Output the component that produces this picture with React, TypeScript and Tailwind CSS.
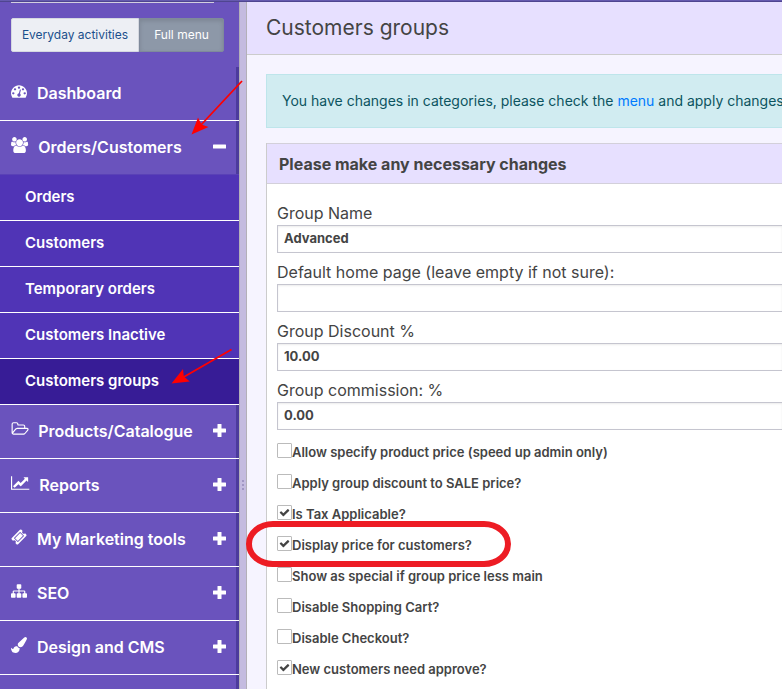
import React from "react";

type IconDef = { w: number; d: string };

const icons: Record<string, IconDef> = {
  dashboard: {
    w: 1792,
    d: "M384 1152q0-53-37.5-90.5t-90.5-37.5-90.5 37.5-37.5 90.5 37.5 90.5 90.5 37.5 90.5-37.5 37.5-90.5zm192-448q0-53-37.5-90.5t-90.5-37.5-90.5 37.5-37.5 90.5 37.5 90.5 90.5 37.5 90.5-37.5 37.5-90.5zm428 481l101-382q6-26-7.5-48.5t-38.5-29.5-48 6.5-30 39.5l-101 382q-60 5-107 43.5t-63 98.5q-20 77 20 146t117 89 146-20 89-117q16-60-6-117t-72-91zm660-33q0-53-37.5-90.5t-90.5-37.5-90.5 37.5-37.5 90.5 37.5 90.5 90.5 37.5 90.5-37.5 37.5-90.5zm-640-640q0-53-37.5-90.5t-90.5-37.5-90.5 37.5-37.5 90.5 37.5 90.5 90.5 37.5 90.5-37.5 37.5-90.5zm448 192q0-53-37.5-90.5t-90.5-37.5-90.5 37.5-37.5 90.5 37.5 90.5 90.5 37.5 90.5-37.5 37.5-90.5zm320 448q0 261-141 483-19 29-54 29h-1402q-35 0-54-29-141-221-141-483 0-182 71-348t191-286 286-191 348-71 348 71 286 191 191 286 71 348z",
  },
  users: {
    w: 1920,
    d: "M593 896q-162 5-265 128h-134q-82 0-138-40.5t-56-118.5q0-353 124-353 6 0 43.5 21t97.5 42.5 119 21.5q67 0 133-23-5 37-5 66 0 139 81 256zm1071 637q0 120-73 189.5t-194 69.5h-874q-121 0-194-69.5t-73-189.5q0-53 3.5-103.5t14-109 26.5-108.5 43-97.5 62-81 85.5-53.5 111.5-20q10 0 43 21.5t73 48 107 48 135 21.5 135-21.5 107-48 73-48 43-21.5q61 0 111.5 20t85.5 53.5 62 81 43 97.5 26.5 108.5 14 109 3.5 103.5zm-1024-1277q0 106-75 181t-181 75-181-75-75-181 75-181 181-75 181 75 75 181zm704 384q0 159-112.5 271.5t-271.5 112.5-271.5-112.5-112.5-271.5 112.5-271.5 271.5-112.5 271.5 112.5 112.5 271.5zm576 225q0 78-56 118.5t-138 40.5h-134q-103-123-265-128 81-117 81-256 0-29-5-66 66 23 133 23 59 0 119-21.5t97.5-42.5 43.5-21q124 0 124 353zm-128-609q0 106-75 181t-181 75-181-75-75-181 75-181 181-75 181 75 75 181z",
  },
  folder: {
    w: 1920,
    d: "M1845 931q0-35-53-35h-1088q-40 0-85.5 21.5t-71.5 52.5l-294 363q-18 24-18 40 0 35 53 35h1088q40 0 86-22t71-53l294-363q18-22 18-39zm-1141-163h768v-160q0-40-28-68t-68-28h-576q-40 0-68-28t-28-68v-64q0-40-28-68t-68-28h-320q-40 0-68 28t-28 68v853l256-315q44-53 116-87.5t140-34.5zm1269 163q0 62-46 120l-295 363q-43 53-116 87.5t-140 34.5h-1088q-92 0-158-66t-66-158v-960q0-92 66-158t158-66h320q92 0 158 66t66 158v32h544q92 0 158 66t66 158v160h192q54 0 99 24.5t67 70.5q15 32 15 68z",
  },
  chart: {
    w: 2048,
    d: "M2048 1536v128h-2048v-1536h128v1408h1920zm-128-1248v435q0 21-19.5 29.5t-35.5-7.5l-121-121-633 633q-10 10-23 10t-23-10l-233-233-416 416-192-192 585-585q10-10 23-10t23 10l233 233 464-464-121-121q-16-16-7.5-35.5t29.5-19.5h435q14 0 23 9t9 23z",
  },
  ticket: {
    w: 1792,
    d: "M1024 452l316 316-572 572-316-316zm-211 979l618-618q19-19 19-45t-19-45l-362-362q-18-18-45-18t-45 18l-618 618q-19 19-19 45t19 45l362 362q18 18 45 18t45-18zm889-637l-907 908q-37 37-90.5 37t-90.5-37l-126-126q56-56 56-136t-56-136-136-56-136 56l-125-126q-37-37-37-90.5t37-90.5l907-906q37-37 90.5-37t90.5 37l125 125q-56 56-56 136t56 136 136 56 136-56l126 125q37 37 37 90.5t-37 90.5z",
  },
  sitemap: {
    w: 1792,
    d: "M1792 1248v320q0 40-28 68t-68 28h-320q-40 0-68-28t-28-68v-320q0-40 28-68t68-28h96v-192h-512v192h96q40 0 68 28t28 68v320q0 40-28 68t-68 28h-320q-40 0-68-28t-28-68v-320q0-40 28-68t68-28h96v-192h-512v192h96q40 0 68 28t28 68v320q0 40-28 68t-68 28h-320q-40 0-68-28t-28-68v-320q0-40 28-68t68-28h96v-192q0-52 38-90t90-38h512v-192h-96q-40 0-68-28t-28-68v-320q0-40 28-68t68-28h320q40 0 68 28t28 68v320q0 40-28 68t-68 28h-96v192h512q52 0 90 38t38 90v192h96q40 0 68 28t28 68z",
  },
  brush: {
    w: 1792,
    d: "M1615 0q70 0 122.5 46.5t52.5 116.5q0 63-45 151-332 629-465 752-97 91-218 91-126 0-216.5-92.5t-90.5-219.5q0-128 92-212l638-579q59-54 130-54zm-909 1034q39 76 106.5 130t150.5 76l1 71q4 213-129.5 347t-348.5 134q-123 0-218-46.5t-152.5-127.5-86.5-183-29-220q7 5 41 30t62 44.5 59 36.5 46 17q41 0 55-37 25-66 57.5-112.5t69.5-76 88-47.5 103-25.5 125-10.5z",
  },
};

function Icon({ name }: { name: string }) {
  const { w, d } = icons[name];
  return (
    <svg
      viewBox={`0 0 ${w} 1792`}
      className="mb-1 h-4 w-auto shrink-0 overflow-visible"
      fill="currentColor"
      aria-hidden="true"
    >
      <path d={d} />
    </svg>
  );
}

function MenuRow({ icon, label, sign }: { icon: string; label: string; sign?: "plus" | "minus" }) {
  return (
    <button
      type="button"
      className="flex h-[53px] w-full items-center gap-[10px] border-r-3 border-r-[#4c3b9c] bg-[#6a53bd] pr-[10px] pb-[2px] pl-[11px] text-left text-base font-semibold text-white"
    >
      <Icon name={icon} />
      <span className="grow whitespace-nowrap">{label}</span>
      {sign && (
        <svg viewBox="0 0 13 13" className="size-[13px] shrink-0" fill="currentColor" aria-hidden="true">
          <rect x="0" y="4.5" width="13" height="4" rx="0.5" />
          {sign === "plus" && <rect x="4.5" y="0" width="4" height="13" rx="0.5" />}
        </svg>
      )}
    </button>
  );
}

const subItems = ["Orders", "Customers", "Temporary orders", "Customers Inactive", "Customers groups"];

const lowerMenu = [
  { icon: "folder", label: "Products/Catalogue" },
  { icon: "chart", label: "Reports" },
  { icon: "ticket", label: "My Marketing tools" },
  { icon: "sitemap", label: "SEO" },
  { icon: "brush", label: "Design and CMS" },
];

const fields = [
  { id: "name", label: "Group Name", value: "Advanced" },
  { id: "home", label: "Default home page (leave empty if not sure):", value: "" },
  { id: "discount", label: "Group Discount %", value: "10.00" },
  { id: "commission", label: "Group commission: %", value: "0.00" },
];

const options = [
  { label: "Allow specify product price (speed up admin only)", on: false },
  { label: "Apply group discount to SALE price?", on: false },
  { label: "Is Tax Applicable?", on: true },
  { label: "Display price for customers?", on: true },
  { label: "Show as special if group price less main", on: false },
  { label: "Disable Shopping Cart?", on: false },
  { label: "Disable Checkout?", on: false },
  { label: "New customers need approve?", on: true },
];

function Option({ label, on }: { label: string; on: boolean }) {
  return (
    <label className="flex h-[31px] items-center text-[13px] font-semibold">
      <span className="mb-1 grid size-[15px] shrink-0">
        <input
          type="checkbox"
          defaultChecked={on}
          className="peer col-start-1 row-start-1 size-[15px] appearance-none rounded-[1px] border border-[#bbb] bg-white"
        />
        <svg
          viewBox="0 0 1792 1792"
          className="pointer-events-none invisible col-start-1 row-start-1 size-[11px] place-self-center peer-checked:visible"
          fill="#444"
          aria-hidden="true"
        >
          <path d="M1671 566q0 40-28 68l-724 724-136 136q-28 28-68 28t-68-28l-136-136-362-362q-28-28-28-68t28-68l136-136q28-28 68-28t68 28l294 295 656-657q28-28 68-28t68 28l136 136q28 28 28 68z" />
        </svg>
      </span>
      {label}
    </label>
  );
}

export default function App() {
  return (
    <div className="relative flex h-screen flex-col overflow-hidden bg-[#f6f4ff] font-['Inter',sans-serif] text-[#444]">
      <div className="h-[2px] shrink-0 border-b border-[#4f4590] bg-[#655aae]" />
      <div className="flex min-h-0 grow">
        <nav className="w-[239px] shrink-0 overflow-hidden bg-[#6a53bd]">
          <div className="mr-[25px] ml-[11px] h-px bg-[#d3cfe0]" />
          <div className="mt-[15px] mr-[15px] mb-[15px] ml-[11px] flex h-[34px] text-xs">
            <button type="button" className="w-32 rounded-l-xs border border-[#d5d8e0] bg-[#edeff4] text-[#1b4f8c]">
              Everyday activities
            </button>
            <button
              type="button"
              className="grow rounded-r-xs border border-[#7f8a9b] bg-[#8d98a8] text-white shadow-[inset_0_2px_4px_rgba(0,0,0,0.12)]"
            >
              Full menu
            </button>
          </div>
          <ul className="divide-y divide-white border-b border-white">
            <li>
              <MenuRow icon="dashboard" label="Dashboard" />
            </li>
            <li>
              <MenuRow icon="users" label="Orders/Customers" sign="minus" />
              <ul className="divide-y divide-white border-t border-[#5a41b6]">
                {subItems.map((item) => (
                  <li key={item}>
                    <a
                      href="#"
                      className={
                        item === "Customers groups"
                          ? "flex h-[45px] items-center bg-[#371c96] pl-[25px] text-[15px] font-semibold text-white"
                          : "flex h-[45px] items-center bg-[#5034b6] pl-[25px] text-[15px] font-semibold text-white"
                      }
                    >
                      {item}
                    </a>
                  </li>
                ))}
              </ul>
            </li>
            {lowerMenu.map((m) => (
              <li key={m.label}>
                <MenuRow icon={m.icon} label={m.label} sign="plus" />
              </li>
            ))}
          </ul>
          <div className="h-full border-r-3 border-[#4c3b9c]" />
        </nav>

        <div className="flex w-2 shrink-0 flex-col items-center gap-[2px] border-x border-[#b3b0b8] bg-[#c4bbe0] pt-[478px]">
          <span className="size-[2px] bg-[#a096c4]" />
          <span className="size-[2px] bg-[#a096c4]" />
          <span className="size-[2px] bg-[#a096c4]" />
        </div>

        <main className="min-w-0 grow overflow-hidden">
          <h1 className="flex h-[53px] items-center border-b border-[#ccc] bg-[#e7e0ff] pl-[19px] text-[21px]">
            Customers groups
          </h1>
          <div className="flex flex-col gap-[15px] pt-[19px] pl-[19px]">
            <p className="border border-r-0 border-[#bee5eb] bg-[#d1ecf1] py-4 pl-[15px] text-sm leading-5 whitespace-nowrap text-[#0c5460]">
              You have changes in categories, please check the{" "}
              <a href="#" className="text-[#007bff]">
                menu
              </a>{" "}
              and apply changes
            </p>
            <section className="border-l border-[#ccc] bg-white pb-10">
              <h2 className="flex h-[41px] items-center border-y border-[#d3d0da] bg-[#e7e0ff] pl-3 text-base font-bold">
                Please make any necessary changes
              </h2>
              <form className="pt-[17px] pl-[10px]">
                {fields.map((f) => (
                  <div key={f.id} className="mb-[7px]">
                    <label htmlFor={f.id} className="block h-6 text-base leading-6">
                      {f.label}
                    </label>
                    <input
                      id={f.id}
                      defaultValue={f.value}
                      className="block h-7 w-full border border-r-0 border-[#c5c5cf] bg-white px-[6px] pb-[2px] text-[13px] font-bold shadow-[inset_0_1px_2px_rgba(0,0,0,0.08)]"
                    />
                  </div>
                ))}
                {options.map((o) => (
                  <Option key={o.label} label={o.label} on={o.on} />
                ))}
              </form>
            </section>
          </div>
        </main>
      </div>

      <svg className="pointer-events-none absolute top-0 left-0 h-[689px] w-[782px]" fill="none" aria-hidden="true">
        <path d="M242 81L200 126" stroke="#f00" strokeWidth="1.8" />
        <path d="M191.500 134.500L198 117.500l3.500 7 7 2.500z" fill="#f00" />
        <path d="M231.500 349.500L182 378" stroke="#f00" strokeWidth="1.8" />
        <path d="M171.500 383.500L183 369l.8 7.500 6 5z" fill="#f00" />
        <rect x="249" y="524" width="259" height="40" rx="24" ry="20" stroke="#ed1c24" strokeWidth="6" />
      </svg>
    </div>
  );
}
